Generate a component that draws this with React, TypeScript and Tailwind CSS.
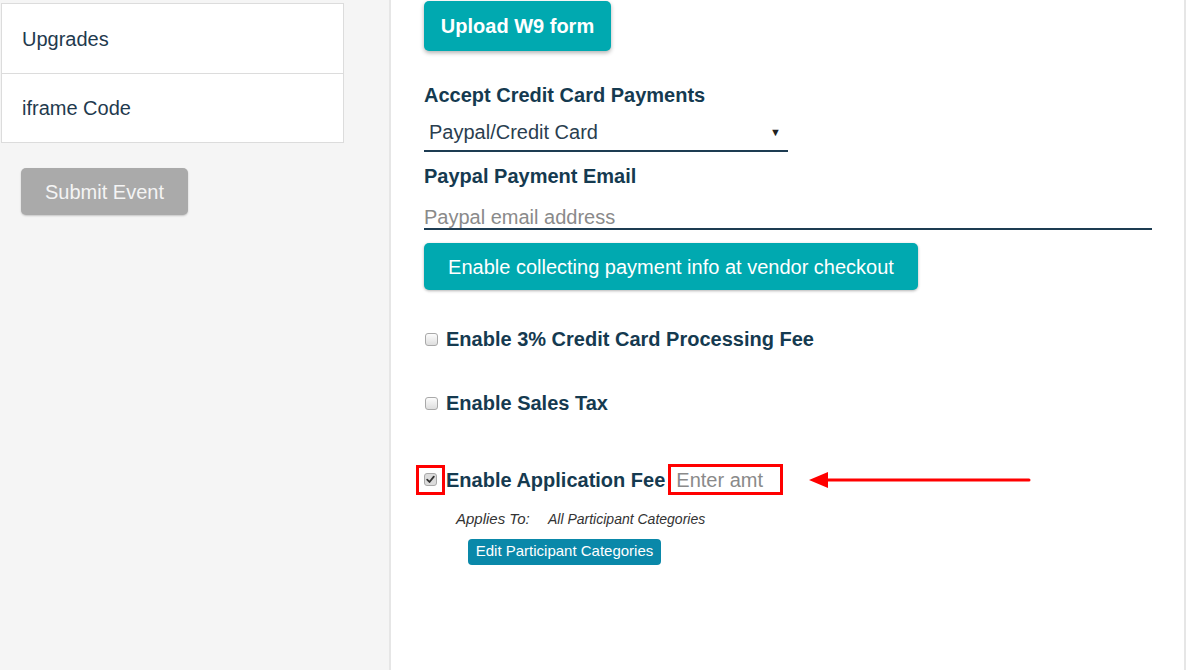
import { useState } from 'react';

const font = { fontFamily: '"Liberation Sans", Arial, sans-serif' };

function Checkbox({ checked }: { checked?: boolean }) {
  return (
    <span
      className={`flex h-[13px] w-[13px] shrink-0 items-center justify-center rounded-[3px] border border-[#a9a9a9] ${
        checked ? 'bg-[#dcdcdc]' : 'bg-gradient-to-b from-[#fcfcfc] to-[#dedede]'
      }`}
    >
      {checked && (
        <svg width="9" height="9" viewBox="0 0 9 9">
          <path d="M1.2 4.6 L3.5 7 L7.8 1.6" fill="none" stroke="#333" strokeWidth="1.8" strokeLinecap="round" strokeLinejoin="round" />
        </svg>
      )}
    </span>
  );
}

export default function App() {
  const [email, setEmail] = useState('');
  const [amt, setAmt] = useState('');

  return (
    <div className="flex h-[670px] w-full overflow-hidden bg-[#f5f5f5]" style={font}>
      {/* sidebar */}
      <aside className="w-[391px] shrink-0 border-r-2 border-[#e6e6e6] bg-[#f5f5f5] pt-[3px]">
        <div className="ml-px w-[343px] border border-[#dcdcdc] bg-white">
          <div className="flex h-[70px] items-center border-b border-[#dcdcdc] pl-[20px] text-[20px] text-[#1f3a4e]">Upgrades</div>
          <div className="flex h-[68px] items-center pl-[20px] text-[20px] text-[#1f3a4e]">iframe Code</div>
        </div>
        <button className="ml-[21px] mt-[25px] h-[47px] w-[167px] rounded-[5px] bg-[#aaaaaa] text-[20px] text-[#f4f4f4] shadow-[0_1px_2px_rgba(0,0,0,0.2)]">
          Submit Event
        </button>
      </aside>

      {/* main panel */}
      <main className="flex-1 border-r-2 border-[#e6e6e6] bg-white pl-[33px] pt-px">
        <button className="h-[50px] w-[187px] rounded-[5px] bg-[#00a9b0] text-[20px] font-bold text-white shadow-[0_2px_4px_rgba(0,0,0,0.3)]">
          Upload W9 form
        </button>

        <div className="mt-[33px] text-[20px] font-bold leading-[22px] text-[#153a50]">Accept Credit Card Payments</div>
        <div className="mt-[4px] flex h-[42px] w-[364px] items-center justify-between border-b-2 border-[#1d3c52] pl-[5px] pr-[7px] pt-[4px] text-[20px] text-[#2a3e4f]">
          <span>Paypal/Credit Card</span>
          <span className="text-[11px] text-[#222]">▼</span>
        </div>

        <div className="mt-[13px] text-[20px] font-bold leading-[22px] text-[#153a50]">Paypal Payment Email</div>
        <input
          value={email}
          onChange={(e) => setEmail(e.target.value)}
          placeholder="Paypal email address"
          className="mt-[13px] block h-[30px] w-[728px] border-b-2 border-[#1d3c52] pt-[5px] text-[20px] text-[#2a3e4f] outline-none placeholder:text-[#8a8a8a]"
        />

        <button className="mt-[13px] h-[47px] w-[494px] rounded-[5px] bg-[#00a9b0] text-[20px] text-white shadow-[0_1px_3px_rgba(0,0,0,0.3)]">
          Enable collecting payment info at vendor checkout
        </button>

        <label className="mt-[37px] flex items-center gap-[8px] pl-px">
          <Checkbox />
          <span className="text-[20px] font-bold leading-[24px] text-[#153a50]">Enable 3% Credit Card Processing Fee</span>
        </label>

        <label className="mt-[40px] flex items-center gap-[8px] pl-px">
          <Checkbox />
          <span className="text-[20px] font-bold leading-[24px] text-[#153a50]">Enable Sales Tax</span>
        </label>

        <div className="ml-[-8px] mt-[49px] flex items-center">
          <span className="flex h-[30px] w-[29px] items-center justify-center border-[3px] border-[#ff0000]">
            <Checkbox checked />
          </span>
          <span className="ml-px text-[20px] font-bold leading-[24px] text-[#153a50]">Enable Application Fee</span>
          <span className="ml-[3px] flex h-[31px] w-[115px] items-center border-[3px] border-[#ff0000] pl-[5px]">
            <input
              value={amt}
              onChange={(e) => setAmt(e.target.value)}
              placeholder="Enter amt"
              className="w-full text-[20px] text-[#2a3e4f] outline-none placeholder:text-[#8a8a8a]"
            />
          </span>
          <svg width="222" height="18" viewBox="0 0 222 18" className="ml-[26px]">
            <polygon points="0,9 19,1 19,17" fill="#ff0000" />
            <line x1="17" y1="9" x2="220" y2="9" stroke="#ff0000" strokeWidth="3" strokeLinecap="round" />
          </svg>
        </div>

        <div className="ml-[32px] mt-[13px] flex items-baseline italic text-[#333]">
          <span className="w-[92px] text-[15px]">Applies To:</span>
          <span className="text-[14px]">All Participant Categories</span>
        </div>
        <button className="ml-[44px] mt-[8px] h-[26px] w-[193px] rounded-[4px] bg-[#0a88a9] text-[15px] text-white">
          Edit Participant Categories
        </button>
      </main>
    </div>
  );
}
